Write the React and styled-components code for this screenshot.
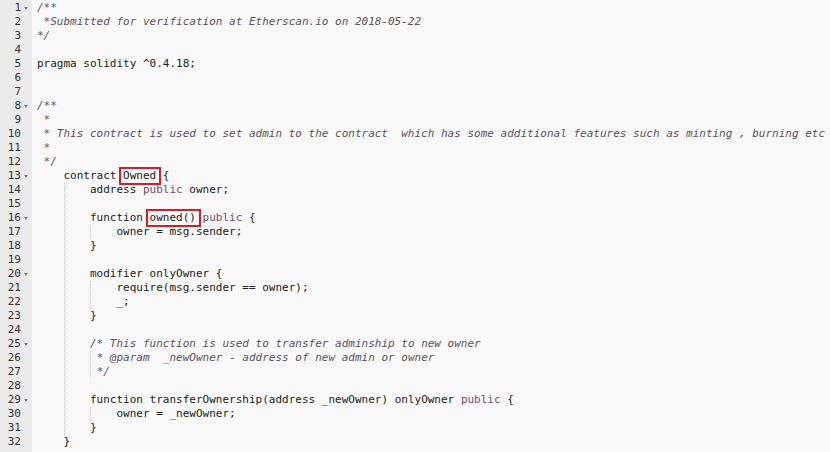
import React from 'react'
import { styled, createGlobalStyle } from 'styled-components'

const GlobalStyle = createGlobalStyle`
  html, body {
    margin: 0;
    padding: 0;
    background: #f9f9f9;
  }
`

const MONO = `"DejaVu Sans Mono", "Liberation Mono", monospace`

const Editor = styled.div`
  display: flex;
  width: 830px;
  height: 452px;
  overflow: hidden;
  background: #f9f9f9;
  font-family: ${MONO};
  font-size: 11px;
  line-height: 14px;
  color: #222;
`

const Gutter = styled.div`
  flex: 0 0 32px;
  background: #ebebeb;
  color: #333;
  padding-top: 1px;
`

const GutterCell = styled.div`
  display: grid;
  grid-template-columns: 21px 11px;
  height: 14px;
  align-items: center;
`

const LineNo = styled.span`
  text-align: right;
`

const FoldWidget = styled.span`
  justify-self: start;
  margin-left: 3px;
  width: 0;
  height: 0;
  border-left: 2.5px solid transparent;
  border-right: 2.5px solid transparent;
  border-top: 3px solid ${p => (p.$open ? '#7a7a7a' : 'transparent')};
`

const Content = styled.div`
  flex: 1;
  padding: 1px 0 0 5px;
`

const Line = styled.div`
  display: flex;
  height: 14px;
  white-space: pre;
`

const Indent = styled.span`
  background-image: ${p =>
    p.$guide ? 'linear-gradient(to bottom, #c2c2c2 1px, transparent 1px)' : 'none'};
  background-size: 1px 2px;
  background-repeat: repeat-y;
  background-position: left top;
`

const Token = styled.span`
  color: ${p => (p.$kind === 'cm' ? '#5a525f' : p.$kind === 'kw' ? '#7b4a72' : '#222')};
  font-style: ${p => (p.$kind === 'cm' ? 'italic' : 'normal')};
`

const Marked = styled.span`
  position: relative;

  &::after {
    content: '';
    position: absolute;
    top: -2px;
    bottom: -2px;
    left: -4px;
    right: -5px;
    border: 2px solid #e3191f;
  }
`

const lines = [
  { fold: true, c: [['cm', '/**']] },
  { c: [['cm', ' *Submitted for verification at Etherscan.io on 2018-05-22']] },
  { c: [['cm', '*/']] },
  {},
  { c: [['', 'pragma solidity ^0.4.18;']] },
  {},
  {},
  { fold: true, c: [['cm', '/**']] },
  { c: [['cm', ' *']] },
  { c: [['cm', ' * This contract is used to set admin to the contract  which has some additional features such as minting , burning etc']] },
  { c: [['cm', ' *']] },
  { c: [['cm', ' */']] },
  { i: 4, fold: true, c: [['', 'contract '], ['box', 'Owned'], ['', ' {']] },
  { i: 8, c: [['', 'address '], ['kw', 'public'], ['', ' owner;']] },
  { g: 1 },
  { i: 8, fold: true, c: [['', 'function '], ['box', 'owned()'], ['', ' '], ['kw', 'public'], ['', ' {']] },
  { i: 12, c: [['', 'owner = msg.sender;']] },
  { i: 8, c: [['', '}']] },
  { g: 1 },
  { i: 8, fold: true, c: [['', 'modifier onlyOwner {']] },
  { i: 12, c: [['', 'require(msg.sender == owner);']] },
  { i: 12, c: [['', '_;']] },
  { i: 8, c: [['', '}']] },
  { g: 1 },
  { i: 8, fold: true, c: [['cm', '/* This function is used to transfer adminship to new owner']] },
  { i: 9, c: [['cm', '* @param  _newOwner - address of new admin or owner']] },
  { i: 9, c: [['cm', '*/']] },
  { g: 1 },
  { i: 8, fold: true, c: [['', 'function transferOwnership(address _newOwner) onlyOwner '], ['kw', 'public'], ['', ' {']] },
  { i: 12, c: [['', 'owner = _newOwner;']] },
  { i: 8, c: [['', '}']] },
  { i: 4, c: [['', '}']] },
]

// split leading whitespace into tab-sized chunks; every chunk after the first carries a guide
function indentChunks(indent, guides) {
  const chunks = []
  if (guides) {
    chunks.push({ s: '    ', guide: false })
    for (let k = 1; k <= guides; k++) chunks.push({ s: k === guides ? ' ' : '    ', guide: true })
    return chunks
  }
  let col = 0
  while (col < indent) {
    const len = Math.min(4, indent - col)
    chunks.push({ s: ' '.repeat(len), guide: col > 0 })
    col += len
  }
  return chunks
}

function CodeLine({ line }) {
  const chunks = indentChunks(line.i || 0, line.g)
  return (
    <Line>
      {chunks.map((ch, n) => (
        <Indent key={'i' + n} $guide={ch.guide}>{ch.s}</Indent>
      ))}
      {(line.c || []).map(([kind, text], n) =>
        kind === 'box' ? (
          <Marked key={n}>{text}</Marked>
        ) : (
          <Token key={n} $kind={kind}>{text}</Token>
        )
      )}
    </Line>
  )
}

export default function App() {
  return (
    <>
      <GlobalStyle />
      <Editor>
        <Gutter>
          {lines.map((line, n) => (
            <GutterCell key={n}>
              <LineNo>{n + 1}</LineNo>
              <FoldWidget $open={!!line.fold} />
            </GutterCell>
          ))}
        </Gutter>
        <Content>
          {lines.map((line, n) => (
            <CodeLine key={n} line={line} />
          ))}
        </Content>
      </Editor>
    </>
  )
}
